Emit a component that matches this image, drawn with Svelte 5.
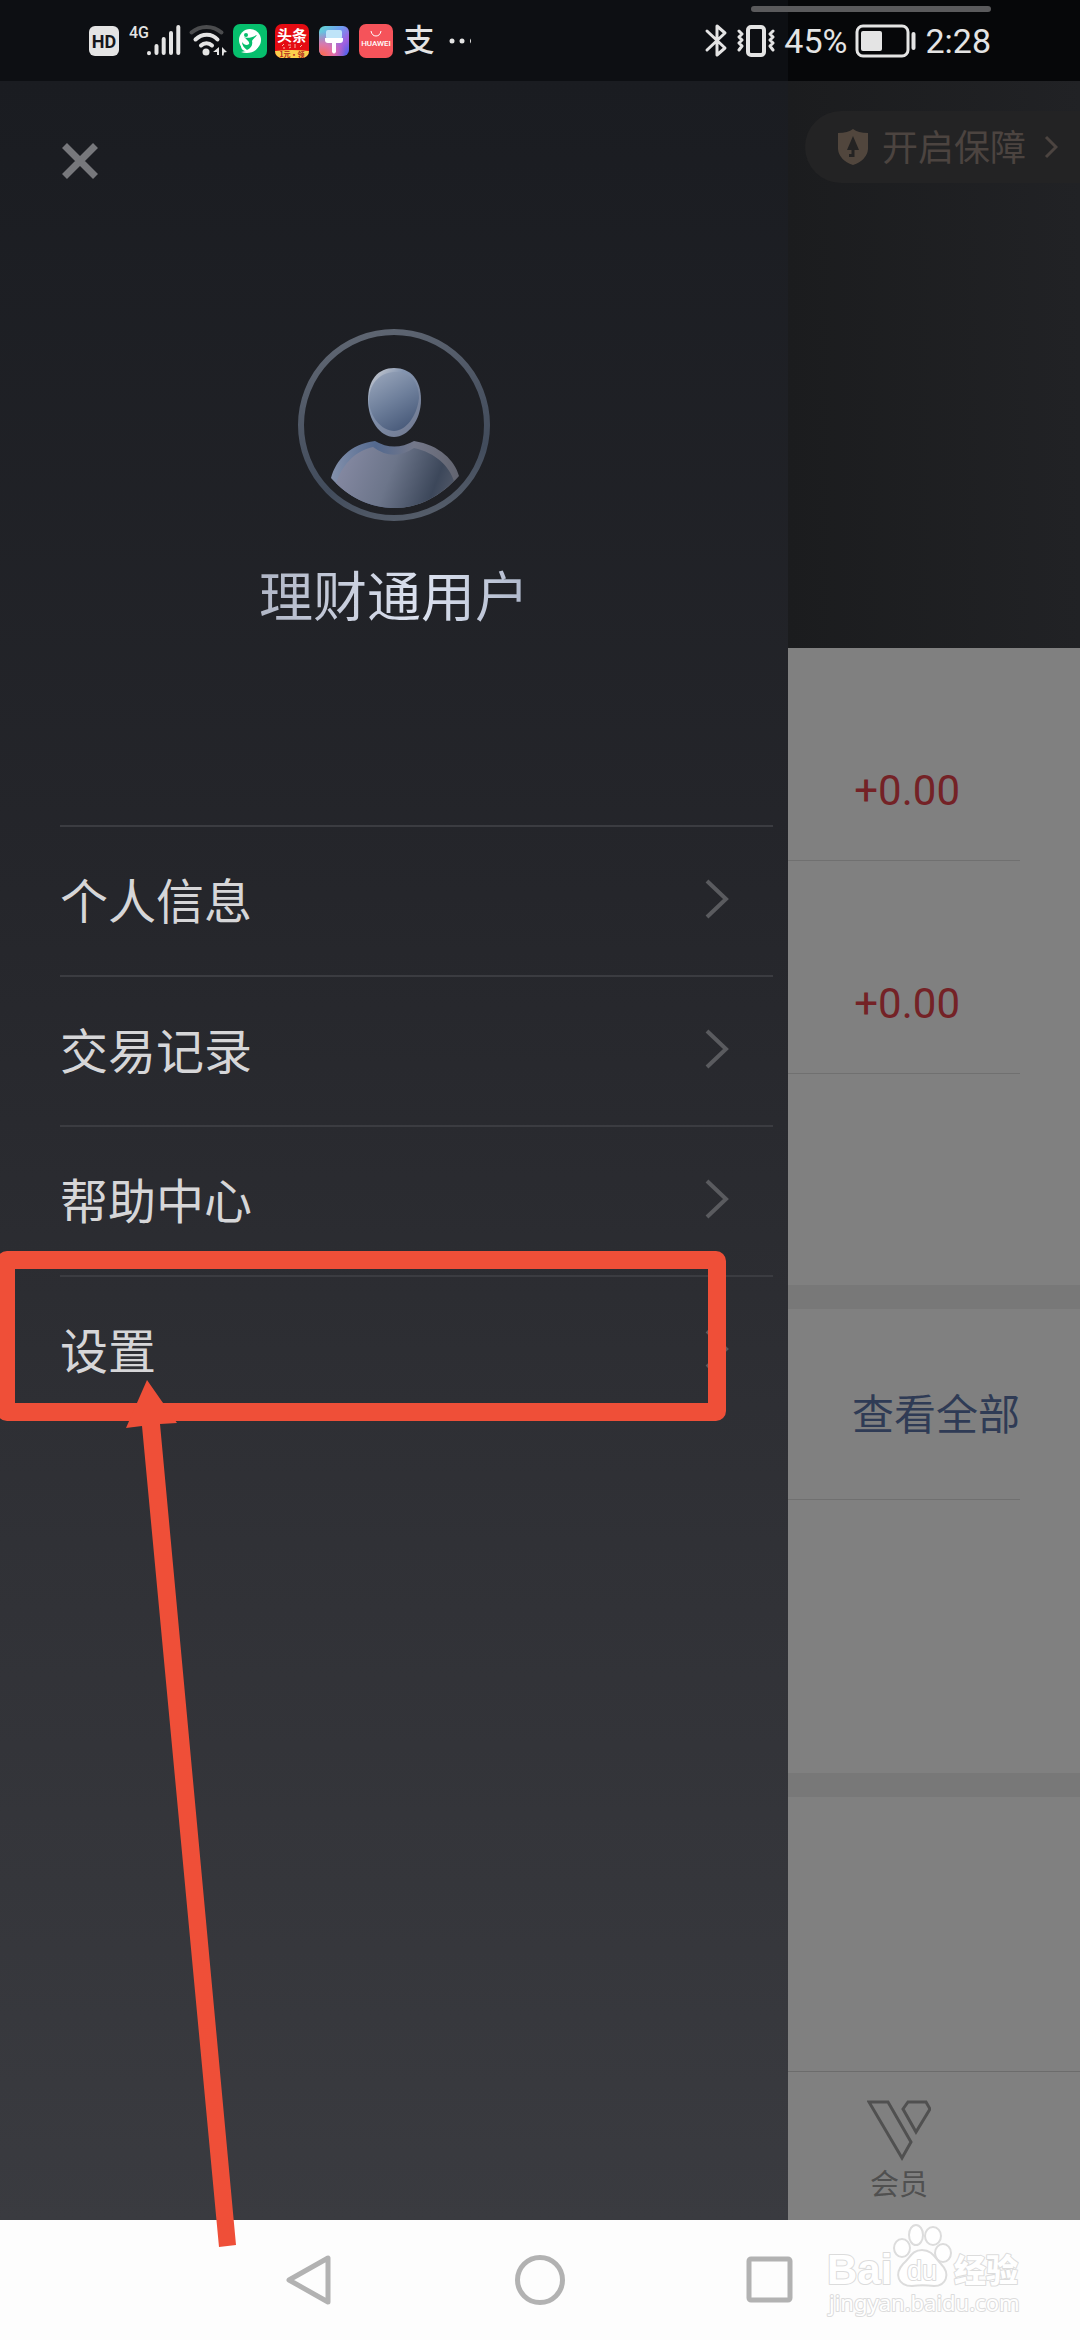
<script lang="ts">
    const menu = ['个人信息', '交易记录', '帮助中心', '设置'];
    const gains = ['+0.00', '+0.00'];
</script>

<div class="phone">
    <header class="status">
        <div class="icons">
            <svg width="34" height="34" viewBox="0 0 34 34">
                <rect x="2" y="2" width="30" height="30" rx="6" fill="#e4e4e4" />
                <text x="17" y="24" class="hd">HD</text>
            </svg>
            <svg width="52" height="34" viewBox="0 0 52 34">
                <text x="0" y="14" class="net">4G</text>
                <g stroke="#e4e4e4" stroke-width="4" stroke-linecap="round">
                    <path d="M20 29.2V29M27.5 29V22M34.7 29V15M42 29V9M49.3 29V3" />
                </g>
            </svg>
            <svg class="wifi" width="36" height="34" viewBox="0 0 36 34" fill="none" stroke-width="4" stroke-linecap="round">
                <path d="M2.500 8.500C11 1 24 1 32.500 8.500" stroke="#4b4c4e" />
                <path d="M6.500 15.500C13 9 23 9 28.500 15.500" stroke="#e4e4e4" />
                <path d="M12 21.500C15 18.500 20 18.500 23 21.500" stroke="#e4e4e4" />
                <circle cx="17" cy="28" r="3.500" fill="#e4e4e4" />
                <path d="M30 23v8h-2v-3h-4zM33 23l5 5-3 .5-.5 3H33z" fill="#e4e4e4" />
            </svg>
            <svg width="34" height="34" viewBox="0 0 34 34">
                <rect width="34" height="34" rx="7" fill="#06bf6d" />
                <circle cx="17" cy="16" r="11" fill="#fff" />
                <path d="M8 17C7 23 9 27 13 27L8 28C14 30 22 29 25 23z" fill="#fff" />
                <circle cx="13" cy="11" r="2" fill="#06bf6d" />
                <path d="M11 13C15 15 19 13 24 11C22 14 20 15 19 17C20 21 18 24 14 26C11 24 9 21 9 18C11 21 14 22 16 20C17 18 14 16 11 13z" fill="#06bf6d" />
            </svg>
            <svg width="34" height="34" viewBox="0 0 34 34">
                <clipPath id="tile"><rect width="34" height="34" rx="7" /></clipPath>
                <g clip-path="url(#tile)">
                    <rect width="34" height="34" fill="#e50b12" />
                    <path d="M0 27Q17 25 34 27V34H0z" fill="#fbd04c" />
                </g>
                <path d="M7 22l2-2M8 24h2M13 21h3M14 24l2-1M20 20v4M25 23l2-2" stroke="#f7b9a8" />
                <text x="17" y="17" class="news">头条</text>
                <text x="17" y="33" class="offer">1元·领</text>
            </svg>
            <svg width="34" height="34" viewBox="0 0 34 34">
                <defs>
                    <linearGradient id="brush" x1="0" y1="0" x2="1" y2="1">
                        <stop offset="0" stop-color="#62dcd0" />
                        <stop offset="0.400" stop-color="#6e9cf2" />
                        <stop offset="0.700" stop-color="#a15fe0" />
                        <stop offset="1" stop-color="#3d63ec" />
                    </linearGradient>
                    <radialGradient id="warm" cx="0.100" cy="1" r="0.800">
                        <stop offset="0" stop-color="#ff6a45" />
                        <stop offset="0.500" stop-color="#f2709c" stop-opacity="0.800" />
                        <stop offset="1" stop-color="#f2609c" stop-opacity="0" />
                    </radialGradient>
                </defs>
                <rect x="2" y="2" width="30" height="30" rx="6" fill="url(#brush)" />
                <rect x="2" y="2" width="30" height="30" rx="6" fill="url(#warm)" />
                <rect x="9" y="6" width="16" height="9" rx="2" fill="#bfe4f8" />
                <path d="M8 14H26V16Q26 19 23 19H19V28Q17 31 15 28V19H11Q8 19 8 16z" fill="#fff" />
            </svg>
            <svg width="34" height="34" viewBox="0 0 34 34">
                <rect width="34" height="34" rx="7" fill="#f5535a" />
                <path d="M12 7Q13 12 17 12T22 7" fill="none" stroke="#fff" />
                <text x="17" y="22" class="brand">HUAWEI</text>
            </svg>
            <svg class="alipay" width="34" height="34" viewBox="0 0 34 34">
                <text x="18" y="27" class="pay">支</text>
            </svg>
            <svg width="34" height="34" viewBox="0 0 34 34" fill="#e4e4e4">
                <circle cx="9" cy="17" r="2.500" />
                <circle cx="19" cy="17" r="2.500" />
                <path d="M28 14.500V19.500Q26 17 28 14.500" />
            </svg>
        </div>
        <div class="sys">
            <svg width="24" height="34" viewBox="0 0 24 34" fill="none" stroke="#e4e4e4" stroke-width="3" stroke-linejoin="round" stroke-linecap="round">
                <path d="M3 7L21 24 13 31V2L21 9 3 26" />
            </svg>
            <svg width="40" height="34" viewBox="0 0 40 34" fill="none" stroke="#e4e4e4" stroke-width="3" stroke-linecap="round" stroke-linejoin="round">
                <rect x="12" y="3" width="16" height="28" rx="3" stroke-width="4" />
                <path d="M3 7l3 3-3 3 3 3-3 3 3 3-3 4M37 7l-3 3 3 3-3 3 3 3-3 3 3 4" />
            </svg>
            <span>45%</span>
            <svg width="62" height="34" viewBox="0 0 62 34">
                <rect x="2" y="2" width="51" height="30" rx="6" fill="none" stroke="#e4e4e4" stroke-width="3" />
                <rect x="6" y="7" width="21" height="20" rx="2" fill="#e4e4e4" />
                <path d="M58.500 10V24" stroke="#e4e4e4" stroke-width="4" stroke-linecap="round" />
            </svg>
            <time>2:28</time>
        </div>
        <i class="handle"></i>
    </header>

    <main>
        <section class="drawer">
            <button class="close" aria-label="关闭">
                <svg width="36" height="36" viewBox="0 0 36 36" stroke="#77787c" stroke-width="7">
                    <path d="M2.500 2.500L33.500 33.500M33.500 2.500L2.500 33.500" />
                </svg>
            </button>
            <div class="user">
                <svg width="192" height="192" viewBox="0 0 192 192">
                    <defs>
                        <linearGradient id="ring" x1="0.300" y1="0" x2="0.600" y2="1">
                            <stop offset="0" stop-color="#5f6672" />
                            <stop offset="0.500" stop-color="#4a5362" />
                            <stop offset="0.750" stop-color="#424c5c" />
                            <stop offset="1" stop-color="#545c69" />
                        </linearGradient>
                        <linearGradient id="head" x1="0.200" y1="0" x2="0.700" y2="1">
                            <stop offset="0" stop-color="#96a3b9" />
                            <stop offset="0.500" stop-color="#6e7f9b" />
                            <stop offset="1" stop-color="#475979" />
                        </linearGradient>
                        <linearGradient id="headEdge" x1="0.100" y1="0" x2="0.900" y2="1">
                            <stop offset="0" stop-color="#cdcfd4" />
                            <stop offset="0.300" stop-color="#8495b0" />
                            <stop offset="1" stop-color="#70788f" />
                        </linearGradient>
                        <linearGradient id="body" x1="0" y1="0.400" x2="1" y2="0.600">
                            <stop offset="0" stop-color="#8589a2" />
                            <stop offset="0.450" stop-color="#6c758a" />
                            <stop offset="0.850" stop-color="#3c475a" />
                            <stop offset="1" stop-color="#4e5666" />
                        </linearGradient>
                        <linearGradient id="bodyEdge">
                            <stop offset="0" stop-color="#8491ac" />
                            <stop offset="0.350" stop-color="#53698f" />
                            <stop offset="0.650" stop-color="#74788a" />
                            <stop offset="1" stop-color="#62646f" />
                        </linearGradient>
                    </defs>
                    <circle cx="96" cy="96" r="93" fill="none" stroke="url(#ring)" stroke-width="6" />
                    <path d="M96 39C113 39 123 51 123 71C123 91 110 108 96 108C82 108 70 91 70 71C70 51 80 39 96 39z" fill="url(#headEdge)" />
                    <path d="M98 43C112 43 121 53 121 69C119 88 107 102 96 102C84 102 71 88 71 70C72 53 83 43 98 43z" fill="url(#head)" />
                    <path d="M77 112Q96 123 116 112C142 116 157 132 161 147C143 167 121 179 97 179C71 179 49 167 33 149C38 131 52 115 77 112z" fill="url(#bodyEdge)" />
                    <path d="M75 118Q95 133 116 119C138 124 151 137 156 152C139 169 119 179 97 179C73 179 53 169 38 154C44 138 54 123 75 118z" fill="url(#body)" />
                </svg>
                <h1>理财通用户</h1>
            </div>
            <ul class="menu">
                {#each menu as item}
                    <li>
                        <button>
                            <span>{item}</span>
                            <svg width="24" height="44" viewBox="0 0 24 44" fill="none" stroke="#5a5b5f" stroke-width="4">
                                <path d="M2 2L21 20 2 38" />
                            </svg>
                        </button>
                    </li>
                {/each}
            </ul>

            <!-- hand-drawn marker around the settings row -->
            <svg class="marker" width="740" height="1010" viewBox="0 0 740 1010" fill="#ef4f38">
                <rect x="6" y="20" width="711" height="152" rx="1" fill="none" stroke="#ef4f38" stroke-width="18" stroke-linejoin="round" />
                <path d="M147 140L177 183 160 184 236 1005 219 1007 142 186 126 188z" />
            </svg>
        </section>

        <section class="page">
            <div class="hero">
                <button class="pill">
                    <svg width="30" height="36" viewBox="0 0 30 36">
                        <path d="M15 0Q20 4 30 4V20Q29 31 15 36Q1 31 0 20V4Q10 4 15 0z" fill="#51463d" />
                        <path d="M15 7L21 21H16.500V28H11V25H13.500V21H9z" fill="#242323" />
                    </svg>
                    <span>开启保障</span>
                    <svg width="14" height="24" viewBox="0 0 14 24" fill="none" stroke="#4c4440" stroke-width="3">
                        <path d="M2 2L12 12 2 22" />
                    </svg>
                </button>
            </div>
            <div class="gains">
                {#each gains as gain}
                    <p>{gain}</p>
                {/each}
            </div>
            <div class="all"><a href="#all">查看全部</a></div>
            <div class="blank"></div>
            <a class="tab" href="#member">
                <svg width="64" height="62" viewBox="0 0 64 62" fill="none" stroke="#505050" stroke-width="3">
                    <path d="M2 2H21L44 42 35 58zM41 2H59L63 9 49 32 36 9z" />
                </svg>
                <span>会员</span>
            </a>
        </section>
    </main>

    <footer>
        <button aria-label="返回">
            <svg width="50" height="50" viewBox="0 0 50 50"><path d="M43 3V47L4 25z" /></svg>
        </button>
        <button aria-label="主屏幕">
            <svg width="50" height="50" viewBox="0 0 50 50"><circle cx="25" cy="25" r="22.500" /></svg>
        </button>
        <button aria-label="最近任务">
            <svg width="50" height="50" viewBox="0 0 50 50"><rect x="4" y="4" width="41" height="41" rx="2" /></svg>
        </button>
        <svg class="watermark" width="200" height="100" viewBox="0 0 200 100">
            <text x="3" y="64" class="big">Bai</text>
            <ellipse cx="78" cy="28" rx="8" ry="9" />
            <ellipse cx="92" cy="15" rx="7" ry="10" />
            <ellipse cx="109" cy="16" rx="8" ry="9" />
            <ellipse cx="119" cy="33" rx="8" ry="9" />
            <path d="M98 30C108 30 111 38 117 44C127 54 122 66 110 66C101 65 96 65 88 66C74 66 70 54 79 44C86 38 88 30 98 30z" />
            <text x="98" y="60" class="du">du</text>
            <text x="130" y="62" class="cn">经验</text>
            <text x="5" y="91" class="url">jingyan.baidu.com</text>
        </svg>
    </footer>
</div>

<style>
    :global(body) {
        margin: 0;
        background: #fdfdfd;
    }

    .phone {
        min-height: 100vh;
        display: flex;
        flex-direction: column;
        font-family: Roboto, "Noto Sans CJK SC", sans-serif;
    }

    button {
        border: 0;
        padding: 0;
        background: none;
        font: inherit;
        color: inherit;
    }

    a {
        text-decoration: none;
    }

    svg {
        display: block;
        flex: none;
    }

    .status {
        position: relative;
        height: 81px;
        box-sizing: border-box;
        padding: 0 89px 0 87px;
        display: flex;
        justify-content: space-between;
        align-items: center;
        background: linear-gradient(to left, #060709 292px, #0d0f13 292px);
        color: #e4e4e4;
    }

    .icons,
    .sys {
        display: flex;
        align-items: center;
        gap: 8px;
    }

    .sys {
        font-size: 34px;
        line-height: 40px;
    }

    .handle {
        position: absolute;
        top: 6px;
        right: 89px;
        width: 240px;
        height: 6px;
        border-radius: 3px;
        background: #5a5a5c;
    }

    .wifi,
    .alipay {
        overflow: visible;
    }

    .hd {
        font: bold 18px Roboto, sans-serif;
        text-anchor: middle;
        fill: #15171b;
    }

    .net {
        font: 500 16px Roboto, sans-serif;
        fill: #e4e4e4;
    }

    .news {
        font: bold 15px "Noto Sans CJK SC", sans-serif;
        text-anchor: middle;
        fill: #fff;
    }

    .offer {
        font: bold 7px "Noto Sans CJK SC", sans-serif;
        text-anchor: middle;
        fill: #b3261c;
    }

    .brand {
        font: 500 8px Roboto, sans-serif;
        text-anchor: middle;
        fill: #fff;
    }

    .pay {
        font: 500 31px/34px "Noto Sans CJK SC", sans-serif;
        text-anchor: middle;
        fill: #e4e4e4;
    }

    main {
        flex: 1;
        display: grid;
        grid-template-columns: 1fr 292px;
    }

    .drawer {
        position: relative;
        z-index: 1;
        background: linear-gradient(#1a1c21, #25262b 38%, #2e2f34 62%, #3a3b40);
    }

    .close {
        display: block;
        margin: 62px 0 0 62px;
    }

    .user {
        display: flex;
        flex-direction: column;
        align-items: center;
        gap: 38px;
        margin-top: 150px;
    }

    h1 {
        margin: 0;
        font-size: 54px;
        line-height: 80px;
        font-weight: 400;
        background: linear-gradient(100deg, #aeb4c4, #dce2f0 60%, #a9b2c6);
        background-clip: text;
        color: transparent;
    }

    .menu {
        margin: 186px 15px 0 60px;
        padding: 0;
        list-style: none;
    }

    .menu button {
        width: 100%;
        height: 150px;
        display: flex;
        justify-content: space-between;
        align-items: center;
        padding-right: 44px;
        border-top: 2px solid #3b3c41;
        font-size: 48px;
        line-height: 72px;
        color: #d6d6d8;
    }

    .menu span {
        padding-top: 4px;
    }

    .marker {
        position: absolute;
        left: 0;
        top: 1159px;
        pointer-events: none;
    }

    .page {
        display: flex;
        flex-direction: column;
        background: #808080;
    }

    .hero {
        height: 537px;
        padding-top: 30px;
        background: linear-gradient(to right, #1b1c1e, #212225);
    }

    .pill {
        width: 275px;
        height: 72px;
        margin-left: auto;
        padding-left: 33px;
        box-sizing: border-box;
        display: flex;
        align-items: center;
        gap: 14px;
        border-radius: 36px 0 0 36px;
        background: #232324;
        font-size: 36px;
        line-height: 54px;
        color: #4c4440;
    }

    .pill span {
        padding: 4px 4px 0 0;
    }

    .gains {
        height: 637px;
        border-bottom: 24px solid #787878;
    }

    .gains p {
        height: 212px;
        margin: 0 60px 0 0;
        padding-right: 60px;
        border-bottom: 1px solid #707070;
        text-align: right;
        font-size: 42px;
        line-height: 286px;
        color: #742226;
    }

    .all {
        height: 190px;
        margin-right: 60px;
        border-bottom: 1px solid #707070;
        text-align: right;
        font-size: 42px;
        line-height: 214px;
    }

    .all a {
        color: #2f3b55;
    }

    .blank {
        height: 273px;
        border-bottom: 24px solid #787878;
    }

    .tab {
        margin-top: auto;
        height: 149px;
        padding: 28px 70px 0 0;
        display: flex;
        flex-direction: column;
        align-items: center;
        box-sizing: border-box;
        border-top: 1px solid #6c6c6c;
        font-size: 29px;
        line-height: 46px;
        color: #505050;
    }

    footer {
        position: relative;
        height: 120px;
        display: flex;
        justify-content: center;
        align-items: center;
        gap: 180px;
        background: #fdfdfd;
    }

    footer button svg {
        fill: none;
        stroke: #b2b2b2;
        stroke-width: 5;
        stroke-linejoin: round;
    }

    .watermark {
        position: absolute;
        right: 56px;
        top: 0;
        overflow: visible;
        fill: #fff;
        stroke: #dcdcdc;
        stroke-width: 2;
        stroke-linejoin: round;
    }

    .watermark text {
        paint-order: stroke;
    }

    .watermark .big {
        font: bold 42px "Liberation Sans", sans-serif;
    }

    .watermark .du {
        font: 27px "Liberation Sans", sans-serif;
        text-anchor: middle;
    }

    .watermark .cn {
        font: 900 32px "Noto Sans CJK SC", sans-serif;
    }

    .watermark .url {
        font: 22px "Noto Sans", sans-serif;
    }
</style>
